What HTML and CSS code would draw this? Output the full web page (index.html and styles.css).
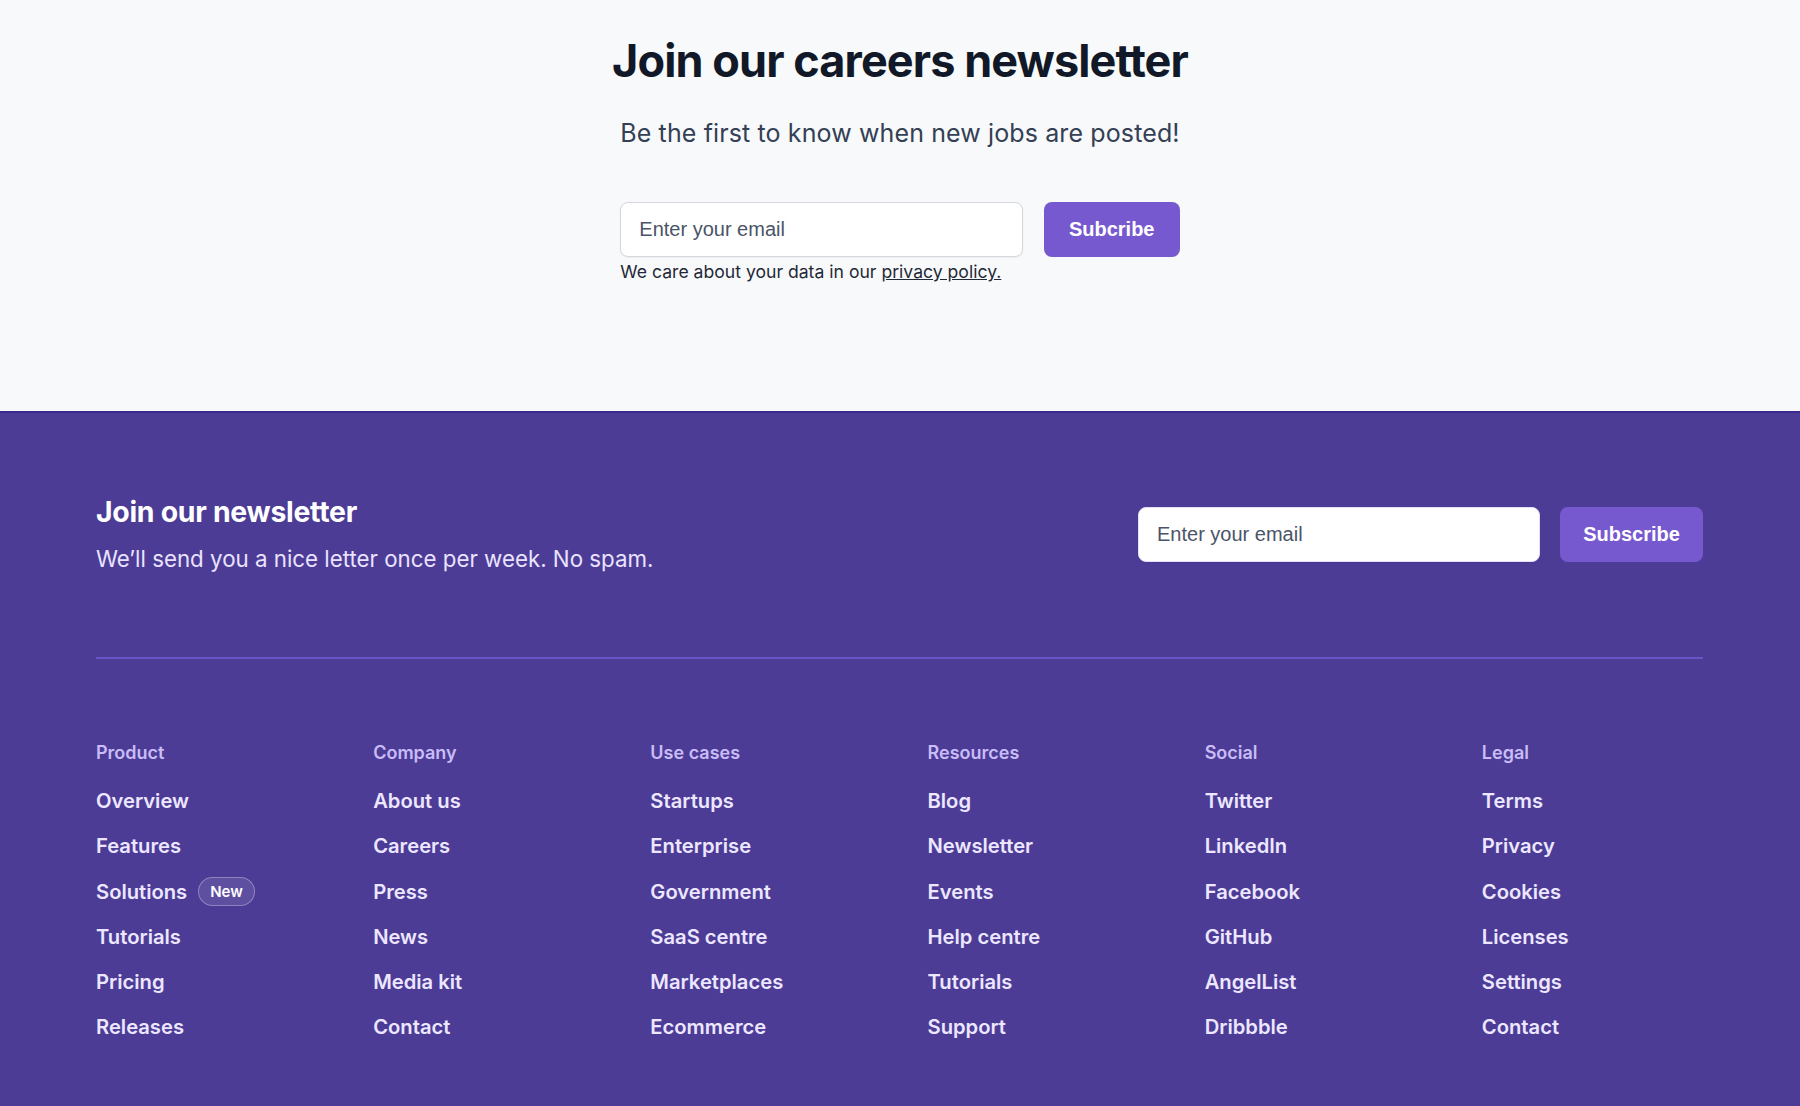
FILE: index.html
```html
<!DOCTYPE html>
<html lang="en">
<head>
<meta charset="utf-8">
<title>Careers newsletter</title>
<link rel="stylesheet" href="styles.css">
</head>
<body>
<section class="careers">
  <h1 class="careers-title">Join our careers newsletter</h1>
  <div class="careers-body">
    <p class="careers-sub">Be the first to know when new jobs are posted!</p>
    <form class="careers-form">
      <div class="careers-field">
        <input class="email-input" type="email" placeholder="Enter your email">
        <p class="privacy">We care about your data in our <a href="#">privacy policy.</a></p>
      </div>
      <button class="btn" type="button">Subcribe</button>
    </form>
  </div>
</section>
<footer class="footer">
  <div class="footer-top">
    <div class="footer-intro">
      <h2 class="footer-title">Join our newsletter</h2>
      <p class="footer-sub">We’ll send you a nice letter once per week. No spam.</p>
    </div>
    <form class="footer-form">
      <input class="email-input footer-input" type="email" placeholder="Enter your email">
      <button class="btn footer-btn" type="button">Subscribe</button>
    </form>
  </div>
  <div class="footer-links">
    <div class="col">
      <h3 class="col-title">Product</h3>
      <ul class="col-list">
        <li><a href="#">Overview</a></li>
        <li><a href="#">Features</a></li>
        <li><a href="#">Solutions</a><span class="badge">New</span></li>
        <li><a href="#">Tutorials</a></li>
        <li><a href="#">Pricing</a></li>
        <li><a href="#">Releases</a></li>
      </ul>
    </div>
    <div class="col">
      <h3 class="col-title">Company</h3>
      <ul class="col-list">
        <li><a href="#">About us</a></li>
        <li><a href="#">Careers</a></li>
        <li><a href="#">Press</a></li>
        <li><a href="#">News</a></li>
        <li><a href="#">Media kit</a></li>
        <li><a href="#">Contact</a></li>
      </ul>
    </div>
    <div class="col">
      <h3 class="col-title">Use cases</h3>
      <ul class="col-list">
        <li><a href="#">Startups</a></li>
        <li><a href="#">Enterprise</a></li>
        <li><a href="#">Government</a></li>
        <li><a href="#">SaaS centre</a></li>
        <li><a href="#">Marketplaces</a></li>
        <li><a href="#">Ecommerce</a></li>
      </ul>
    </div>
    <div class="col">
      <h3 class="col-title">Resources</h3>
      <ul class="col-list">
        <li><a href="#">Blog</a></li>
        <li><a href="#">Newsletter</a></li>
        <li><a href="#">Events</a></li>
        <li><a href="#">Help centre</a></li>
        <li><a href="#">Tutorials</a></li>
        <li><a href="#">Support</a></li>
      </ul>
    </div>
    <div class="col">
      <h3 class="col-title">Social</h3>
      <ul class="col-list">
        <li><a href="#">Twitter</a></li>
        <li><a href="#">LinkedIn</a></li>
        <li><a href="#">Facebook</a></li>
        <li><a href="#">GitHub</a></li>
        <li><a href="#">AngelList</a></li>
        <li><a href="#">Dribbble</a></li>
      </ul>
    </div>
    <div class="col">
      <h3 class="col-title">Legal</h3>
      <ul class="col-list">
        <li><a href="#">Terms</a></li>
        <li><a href="#">Privacy</a></li>
        <li><a href="#">Cookies</a></li>
        <li><a href="#">Licenses</a></li>
        <li><a href="#">Settings</a></li>
        <li><a href="#">Contact</a></li>
      </ul>
    </div>
  </div>
</footer>
</body>
</html>
```
FILE: styles.css
```css
* { box-sizing: border-box; }
html, body { margin: 0; padding: 0; }
body {
  font-family: Inter, "Noto Sans", sans-serif;
  background: #f8f9fb;
  color: #111827;
}

.careers {
  height: 411px;
  padding-top: 34px;
  display: flex;
  flex-direction: column;
  align-items: center;
  background: #f8f9fb;
}
.careers-title {
  margin: 0;
  font-size: 45px;
  line-height: 54px;
  font-weight: 700;
  letter-spacing: -0.02em;
  color: #111827;
}
.careers-body {
  margin-top: 29px;
  display: flex;
  flex-direction: column;
}
.careers-sub {
  margin: 0;
  font-size: 25px;
  line-height: 32px;
  letter-spacing: 0.12px;
  color: #344054;
}
.careers-form {
  margin-top: 53px;
  display: flex;
  gap: 21px;
  align-items: flex-start;
}
.careers-field {
  flex: 1;
  display: flex;
  flex-direction: column;
}
.email-input {
  height: 55px;
  width: 100%;
  padding: 0 18px;
  border: 1px solid #d5d7dc;
  border-radius: 8px;
  background: #fff;
  font-family: "Liberation Sans", Arial, sans-serif;
  font-size: 20px;
  color: #111827;
  box-shadow: 0 1px 2px rgba(16, 24, 40, 0.05);
}
.email-input::placeholder { color: #4a5468; }
.privacy {
  margin: 3px 0 0;
  font-size: 17.6px;
  line-height: 24px;
  color: #1f2937;
}
.privacy a { color: #1f2937; text-decoration: underline; }
.btn {
  height: 55px;
  width: 136px;
  border: none;
  border-radius: 8px;
  background: #7759cf;
  color: #fff;
  font-family: "Liberation Sans", Arial, sans-serif;
  font-weight: 700;
  font-size: 20px;
  cursor: pointer;
}

.footer {
  background: #4c3c96;
  border-top: 2px solid #3b2a90;
  padding: 0 97px 40px 96px;
  min-height: 695px;
}
.footer-top {
  display: flex;
  justify-content: space-between;
  align-items: center;
  padding: 81px 0 83px;
  border-bottom: 2px solid #6a55c8;
}
.footer-title {
  margin: 0;
  font-size: 28.4px;
  line-height: 36px;
  font-weight: 700;
  color: #fff;
  letter-spacing: -0.01em;
}
.footer-sub {
  margin: 14px 0 0;
  font-size: 22.3px;
  line-height: 30px;
  color: #e9e3ff;
}
.footer-form {
  display: flex;
  gap: 20px;
  align-items: center;
}
.footer-input {
  width: 402px;
  border-color: #e4e0f5;
}
.footer-btn { width: 143px; }

.footer-links {
  display: grid;
  grid-template-columns: repeat(6, 1fr);
  column-gap: 56px;
  padding-top: 82px;
}
.col-title {
  margin: 0;
  font-size: 18px;
  line-height: 24px;
  font-weight: 600;
  color: #c9bcf7;
}
.col-list {
  list-style: none;
  margin: 21px 0 0;
  padding: 0;
  display: flex;
  flex-direction: column;
  gap: 15.3px;
}
.col-list li {
  display: flex;
  align-items: center;
  height: 30px;
}
.col-list a {
  color: #ece7ff;
  text-decoration: none;
  font-size: 20.2px;
  font-weight: 600;
  line-height: 30px;
}
.badge {
  margin-left: 11px;
  height: 29px;
  padding: 0 11px;
  display: inline-flex;
  align-items: center;
  border: 1.5px solid rgba(255, 255, 255, 0.3);
  border-radius: 15px;
  background: rgba(255, 255, 255, 0.1);
  color: #fff;
  font-size: 15px;
  font-weight: 600;
}
```
